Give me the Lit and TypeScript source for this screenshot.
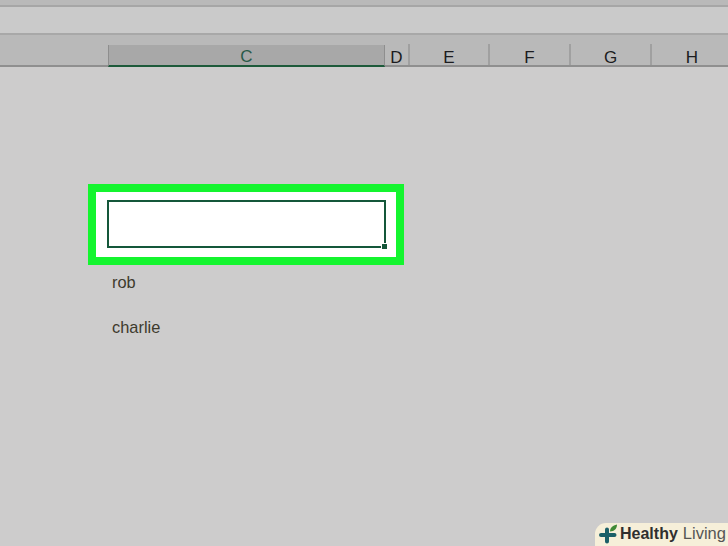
import { LitElement, html, css } from "lit";
import { customElement } from "lit/decorators.js";

@customElement("app-root")
export class AppRoot extends LitElement {
  static styles = css`
    :host {
      display: block;
      width: 728px;
      height: 546px;
      position: relative;
      overflow: hidden;
      background: #cdcccc;
      font-family: "Liberation Sans", Arial, sans-serif;
    }
    .top { height: 5px; background: #b9b9b9; border-bottom: 2px solid #a6a6a6; }
    .formula { height: 26px; background: #cacaca; border-bottom: 2px solid #a8a8a8; }
    .headers {
      height: 30px;
      background: #b9b9b9;
      border-bottom: 2px solid #8f8f8f;
      display: flex;
      align-items: flex-end;
      padding-left: 108px;
    }
    .col {
      height: 21px;
      box-sizing: border-box;
      display: flex;
      align-items: center;
      justify-content: center;
      font-size: 17px;
      line-height: 1;
      color: #1c1c20;
      padding-top: 6px;
      border-right: 2px solid #a0a0a0;
      flex: none;
    }
    .col.c {
      width: 277px;
      background: #a8a8a8;
      color: #2a5a48;
      border-left: 1px solid #8e8e8e;
      border-right: 1px solid #8e8e8e;
      height: 22px;
      margin-bottom: -2px;
      border-bottom: 2px solid #1d5a3a;
      padding-top: 2px;
    }
    .col.d { width: 25px; }
    .col.e { width: 80px; }
    .col.f { width: 81px; }
    .col.g { width: 81px; }
    .col.h { width: 80px; border-right: none; }
    .sheet { padding: 117px 0 0 88px; }
    .callout {
      width: 316px;
      height: 81px;
      box-sizing: border-box;
      border: 8px solid #14f52f;
      background: #fff;
      padding: 8px 0 0 11px;
    }
    .cell {
      width: 279px;
      height: 48px;
      box-sizing: border-box;
      border: 2px solid #14573a;
      position: relative;
    }
    .handle {
      position: absolute;
      right: -3px;
      bottom: -3px;
      width: 5px;
      height: 5px;
      background: #14573a;
      box-shadow: -1px -1px 0 #fff;
    }
    .names {
      margin: 8px 0 0 24px;
      font-size: 16.4px;
      line-height: 19px;
      color: #3d3a2c;
      display: flex;
      flex-direction: column;
      gap: 26px;
    }
    .badge {
      position: absolute;
      right: 0;
      bottom: 0;
      width: 133px;
      height: 23px;
      background: #f6efd9;
      border-top-left-radius: 11px;
      display: flex;
      align-items: center;
      white-space: nowrap;
      font-size: 16px;
      line-height: 21px;
      padding-bottom: 2px;
      box-sizing: border-box;
      color: #3b3b3b;
    }
    .badge svg { flex: none; margin: 2px 2px 0 3px; }
    .badge b { color: #2f2f2f; margin-right: 5px; }
    .badge span { color: #555; font-size: 16.500px; }
  `;

  render() {
    return html`
      <div class="top"></div>
      <div class="formula"></div>
      <div class="headers">
        <div class="col c">C</div>
        <div class="col d">D</div>
        <div class="col e">E</div>
        <div class="col f">F</div>
        <div class="col g">G</div>
        <div class="col h">H</div>
      </div>
      <div class="sheet">
        <div class="callout">
          <div class="cell"><div class="handle"></div></div>
        </div>
        <div class="names">
          <div>rob</div>
          <div>charlie</div>
        </div>
      </div>
      <div class="badge">
        <svg width="20" height="21" viewBox="0 0 20 21">
          <path d="M7 7V5.500a2 2 0 0 1 4 0V9h5.500a2 2 0 0 1 0 4H11v4.500a2 2 0 0 1-4 0V13H3a2 2 0 0 1 0-4h4z" fill="#1b5f68" />
          <path d="M12 7.500c0-3.500 2.500-6 7-7 0 4-2.500 7-7 7z" fill="#3f8a35" />
        </svg>
        <b>Healthy</b><span>Living</span>
      </div>
    `;
  }
}
